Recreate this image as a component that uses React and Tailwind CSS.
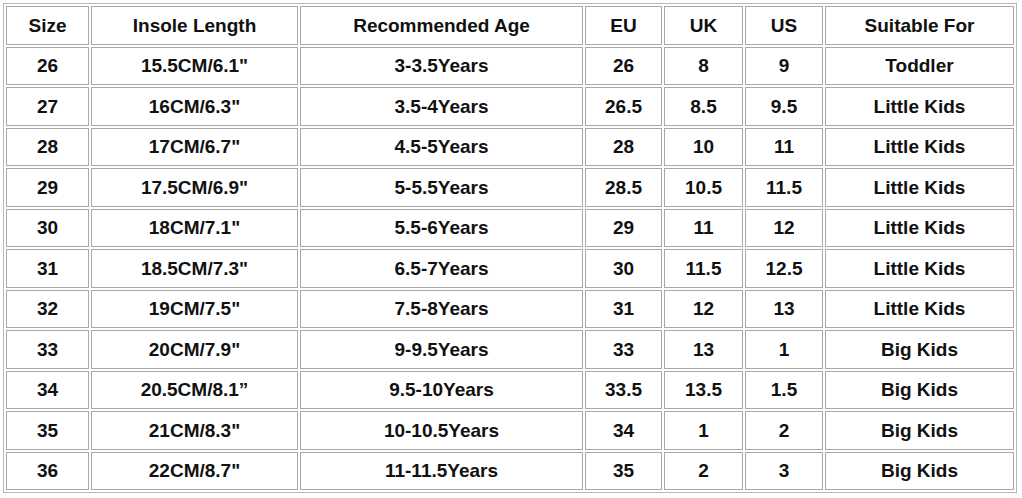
import React from "react";

const header = ["Size", "Insole Length", "Recommended Age", "EU", "UK", "US", "Suitable For"];
const rows = [
  ["26", "15.5CM/6.1\"", "3-3.5Years", "26", "8", "9", "Toddler"],
  ["27", "16CM/6.3\"", "3.5-4Years", "26.5", "8.5", "9.5", "Little Kids"],
  ["28", "17CM/6.7\"", "4.5-5Years", "28", "10", "11", "Little Kids"],
  ["29", "17.5CM/6.9\"", "5-5.5Years", "28.5", "10.5", "11.5", "Little Kids"],
  ["30", "18CM/7.1\"", "5.5-6Years", "29", "11", "12", "Little Kids"],
  ["31", "18.5CM/7.3\"", "6.5-7Years", "30", "11.5", "12.5", "Little Kids"],
  ["32", "19CM/7.5\"", "7.5-8Years", "31", "12", "13", "Little Kids"],
  ["33", "20CM/7.9\"", "9-9.5Years", "33", "13", "1", "Big Kids"],
  ["34", "20.5CM/8.1\u201d", "9.5-10Years", "33.5", "13.5", "1.5", "Big Kids"],
  ["35", "21CM/8.3\"", "10-10.5Years", "34", "1", "2", "Big Kids"],
  ["36", "22CM/8.7\"", "11-11.5Years", "35", "2", "3", "Big Kids"],
];

const cell = "border border-[#a8a8a8] text-center align-middle p-0 font-bold text-[#111111] text-[19px] leading-none";

export default function App() {
  return (
    <div className="w-[1022px] h-[498px] bg-white pl-[3px] pt-[3px]" style={{ fontFamily: '"Liberation Sans", Arial, sans-serif' }}>
      <table className="w-[1014px] border border-[#b8b8b8] border-separate border-spacing-[2px] table-fixed">
        <colgroup>
          <col className="w-[83px]" />
          <col className="w-[207px]" />
          <col className="w-[283px]" />
          <col className="w-[77px]" />
          <col className="w-[79px]" />
          <col className="w-[78px]" />
          <col className="w-[189px]" />
        </colgroup>
        <thead>
          <tr className="h-[38.5px]">
            {header.map((h) => (
              <th key={h} className={cell}>{h}</th>
            ))}
          </tr>
        </thead>
        <tbody>
          {rows.map((r) => (
            <tr key={r[0]} className="h-[38.5px]">
              {r.map((c, i) => (
                <td key={i} className={cell}>{c}</td>
              ))}
            </tr>
          ))}
        </tbody>
      </table>
    </div>
  );
}
